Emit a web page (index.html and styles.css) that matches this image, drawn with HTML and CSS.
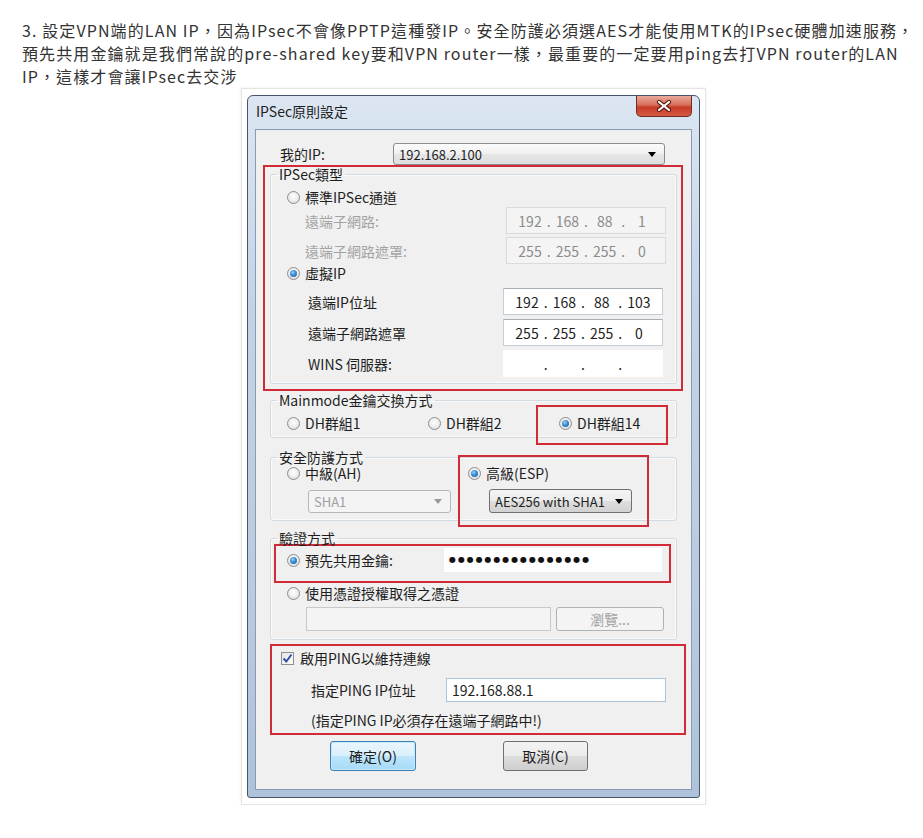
FILE: index.html
```html
<!DOCTYPE html>
<html lang="zh-Hant">
<head>
    <meta charset="UTF-8">
    <title>設定VPN端的LAN IP</title>
    <link rel="stylesheet" href="styles.css">
</head>
<body>
    <div class="post">
        <p>3. 設定VPN端的LAN IP，因為IPsec不會像PPTP這種發IP。安全防護必須選AES才能使用MTK的IPsec硬體加速服務，<br>預先共用金鑰就是我們常說的pre-shared key要和VPN router一樣，最重要的一定要用ping去打VPN router的LAN<br>IP，這樣才會讓IPsec去交涉</p>

        <div class="shot">
            <div class="window">
                <div class="titlebar">
                    <span class="title">IPSec原則設定</span>
                    <span class="close">
                        <svg width="16" height="12" viewBox="0 0 16 12"><path d="M3 2l10 8M13 2L3 10" stroke="#5a1a12" stroke-width="4.2" stroke-linecap="round"/><path d="M3 2l10 8M13 2L3 10" stroke="#fff" stroke-width="2.2" stroke-linecap="round"/></svg>
                    </span>
                </div>

                <div class="client">
                    <div class="row-myip">
                        <span class="lbl-myip">我的IP:</span>
                        <div class="combo wide"><span>192.168.2.100</span><svg width="8" height="5" viewBox="0 0 8 5"><path d="M0 0h8L4 5z"/></svg></div>
                    </div>

                    <!-- IPSec type -->
                    <div class="mark mark-type">
                        <fieldset>
                            <legend>IPSec類型</legend>
                            <div class="gb-body">
                                <div class="opt"><span class="radio"></span>標準IPSec通道</div>
                                <div class="frow off first">
                                    <span>遠端子網路:</span>
                                    <div class="field ip"><span>192</span><i>.</i><span>168</span><i>.</i><span>88</span><i>.</i><span>1</span></div>
                                </div>
                                <div class="frow off">
                                    <span>遠端子網路遮罩:</span>
                                    <div class="field ip"><span>255</span><i>.</i><span>255</span><i>.</i><span>255</span><i>.</i><span>0</span></div>
                                </div>
                                <div class="opt"><span class="radio on"></span>虛擬IP</div>
                                <div class="frow on first">
                                    <span>遠端IP位址</span>
                                    <div class="field ip"><span>192</span><i>.</i><span>168</span><i>.</i><span>88</span><i>.</i><span>103</span></div>
                                </div>
                                <div class="frow on">
                                    <span>遠端子網路遮罩</span>
                                    <div class="field ip"><span>255</span><i>.</i><span>255</span><i>.</i><span>255</span><i>.</i><span>0</span></div>
                                </div>
                                <div class="frow on">
                                    <span>WINS 伺服器:</span>
                                    <div class="field ip bare"><span></span><i>.</i><span></span><i>.</i><span></span><i>.</i><span></span></div>
                                </div>
                            </div>
                        </fieldset>
                    </div>

                    <!-- Mainmode -->
                    <fieldset class="gb gb-main">
                        <legend>Mainmode金鑰交換方式</legend>
                        <div class="gb-body dh-row">
                            <div class="opt"><span class="radio"></span>DH群組1</div>
                            <div class="opt"><span class="radio"></span>DH群組2</div>
                            <div class="mark mark-dh"><div class="opt"><span class="radio on"></span>DH群組14</div></div>
                        </div>
                    </fieldset>

                    <!-- security -->
                    <fieldset class="gb gb-sec">
                        <legend>安全防護方式</legend>
                        <div class="gb-body sec-row">
                            <div>
                                <div class="opt"><span class="radio"></span>中級(AH)</div>
                                <div class="combo off sha"><span>SHA1</span><svg width="8" height="5" viewBox="0 0 8 5"><path d="M0 0h8L4 5z"/></svg></div>
                            </div>
                            <div class="mark mark-esp">
                                <div class="opt"><span class="radio on"></span>高級(ESP)</div>
                                <div class="combo aes"><span>AES256 with SHA1</span><svg width="8" height="5" viewBox="0 0 8 5"><path d="M0 0h8L4 5z"/></svg></div>
                            </div>
                        </div>
                    </fieldset>

                    <!-- auth -->
                    <fieldset class="gb gb-auth">
                        <legend>驗證方式</legend>
                        <div class="gb-body">
                            <div class="mark mark-psk">
                                <div class="opt psk-opt"><span class="radio on"></span>預先共用金鑰:</div>
                                <div class="field psk">●●●●●●●●●●●●●●●●</div>
                            </div>
                            <div class="opt cert-opt"><span class="radio"></span>使用憑證授權取得之憑證</div>
                            <div class="cert-row">
                                <div class="field off cert"></div>
                                <div class="btn off browse">瀏覽...</div>
                            </div>
                        </div>
                    </fieldset>

                    <!-- ping -->
                    <div class="mark mark-ping">
                        <div class="opt chk-opt">
                            <span class="check"><svg width="11" height="11" viewBox="0 0 11 11"><path d="M1.5 5.5l2.8 3L9.5 1.5" fill="none" stroke="#304f9e" stroke-width="2"/></svg></span>
                            啟用PING以維持連線
                        </div>
                        <div class="ping-row">
                            <span>指定PING IP位址</span>
                            <div class="field ping">192.168.88.1</div>
                        </div>
                        <div class="ping-note">(指定PING IP必須存在遠端子網路中!)</div>
                    </div>

                    <div class="buttons">
                        <div class="btn ok">確定(O)</div>
                        <div class="btn cancel">取消(C)</div>
                    </div>
                </div>
            </div>
        </div>
    </div>
</body>
</html>
```

FILE: styles.css
```css
body { margin: 0; background: #fff; color: #333; font-family: "Noto Sans CJK TC", sans-serif; }
.post { padding: 19px 0 0 22px; }
.post p { margin: 0; font-size: 16px; line-height: 23px; letter-spacing: 1.1px; }

/* picture frame */
.shot { width: 453px; margin-left: 219px; padding: 6px 5px; border: 1px solid #e4e4e4; box-shadow: 0 0 3px rgba(0, 0, 0, .08); background: #fff; }

/* win7 window */
.window { width: 453px; box-sizing: border-box; padding: 0 7px 7px; border: 1px solid #46566b; border-radius: 6px 6px 3px 3px; background: linear-gradient(#dce6f2, #c3d3e6 30%, #b9cbe0 70%, #aec2da); color: #1e1e1e; font-size: 14px; }
.titlebar { height: 33px; display: flex; justify-content: space-between; align-items: flex-start; }
.title { padding-left: 1px; line-height: 30px; }
.close { width: 56px; height: 21px; display: flex; align-items: center; justify-content: center; border: 1px solid #6e2a24; border-top: none; border-radius: 0 0 5px 5px; background: linear-gradient(#eaa898, #d66f5c 45%, #c73a27 55%, #d45a44); box-sizing: border-box; }
.client { border: 1px solid #8a9bb1; background: #f0f0f0; padding: 13px 0 18px; }

.row-myip { display: flex; align-items: center; padding-left: 24px; }
.lbl-myip { width: 113px; }

.combo { height: 22px; box-sizing: border-box; display: flex; align-items: center; justify-content: space-between; padding: 0 8px 0 5px; border: 1px solid #707070; border-radius: 3px; background: linear-gradient(#f4f4f4, #ececec 50%, #dedede 50%, #d2d2d2); font-size: 13px; }
.combo.wide { width: 272px; background: linear-gradient(#fbfbfb, #f0f0f0 50%, #e6e6e6 50%, #dfdfdf); border-color: #8d8d8d; }
.combo.off { background: #f4f4f4; border-color: #b5b8bb; color: #a0a0a0; }
.combo.off svg { fill: #9a9a9a; }

/* red notes drawn on the screenshot */
.mark { border: 2px solid #d22b38; }
.mark-type { margin: 0 8px 0 7px; padding: 0 4px 5px 5px; }

fieldset { margin: 0; min-width: 0; padding: 0 10px 6px 8px; border: 1px solid #d3dbe2; border-radius: 3px; box-shadow: inset 0 0 0 1px #fafafa; }
legend { margin-left: -2px; padding: 0 2px; font-size: 14px; line-height: 14px; }
.gb { margin: 0 14px; }
.gb-body { padding-left: 8px; }

.opt { display: flex; align-items: center; height: 18px; }
.mark-type .opt:first-child { margin-top: 7px; }
.radio { position: relative; width: 13px; height: 13px; margin-right: 5px; box-sizing: border-box; border: 1px solid #8d8d8d; border-radius: 50%; background: radial-gradient(circle at 50% 40%, #fff 0, #ececec 55%, #cfcfcf 100%); }
.radio.on::after { content: ""; position: absolute; left: 2px; top: 2px; width: 7px; height: 7px; border-radius: 50%; background: radial-gradient(circle at 40% 35%, #9ad3f8 0, #3a8ad0 45%, #155d9f 100%); }

.frow { display: flex; align-items: center; justify-content: space-between; height: 27px; margin-top: 4px; padding-left: 18px; }
.frow.first { margin-top: 1px; }
.frow.off + .frow.off { margin-top: 3px; }
.opt + .frow.on { margin-top: 6px; }
.frow.off { color: #a3a3a3; }
.frow.on { padding-left: 21px; }
.frow.on .field { margin-right: 3px; }

.field { height: 100%; box-sizing: border-box; border: 1px solid #c5cdd6; border-top-color: #a8aeb6; background: #fff; }
.ip { width: 160px; display: flex; align-items: center; padding: 0 8px; }
.ip span { width: 30px; text-align: center; }
.ip i { flex: 1; text-align: center; font-style: normal; }
.frow.off .ip { background: #f4f4f4; border-color: #dadada; color: #8c8c8c; }
.ip.bare { border-color: #fff; }

.gb-main { margin-top: 2px; padding-bottom: 5px; }
.dh-row { display: grid; grid-template-columns: 141px 108px 132px; padding-top: 7px; }
.mark-dh { margin: -9px 0 -13px; padding: 7px 0 11px 21px; }

.gb-sec { margin-top: 12px; padding-bottom: 7px; }
.sec-row { display: grid; grid-template-columns: 171px 191px; }
.sha { width: 143px; height: 23px; margin: 8px 0 0 21px; }
.mark-esp { margin: -9px 0 -14px; padding: 7px 0 12px 8px; }
.aes { width: 143px; height: 24px; margin: 7px 0 0 21px; }

.gb-auth { margin-top: 10px; padding-bottom: 8px; }
.mark-psk { display: flex; align-items: center; margin: -1px -5px 0 -13px; padding: 1px 6px 8px 11px; }
.psk-opt { width: 156px; }
.psk { width: 220px; height: 26px; padding-left: 5px; font-family: "DejaVu Sans", sans-serif; font-size: 8px; line-height: 24px; letter-spacing: 1.9px; color: #111; border-color: #eceef0; }
.cert-opt { margin-top: 1px; }
.cert-row { display: flex; height: 24px; margin-top: 5px; padding-left: 19px; }
.cert { width: 245px; background: #f4f4f4; border-color: #c9c9c9; }

.btn { box-sizing: border-box; display: flex; align-items: center; justify-content: center; border: 1px solid #707070; border-radius: 3px; background: linear-gradient(#f3f3f3, #ebebeb 50%, #dddddd 50%, #cfcfcf); }
.btn.off { color: #a3a3a3; border-color: #adb2b5; background: #f4f4f4; }
.browse { width: 108px; margin-left: 5px; }

.mark-ping { margin: 4px 5px 0 14px; padding: 3px 0 4px 9px; }
.check { width: 13px; height: 13px; margin-right: 6px; box-sizing: border-box; border: 1px solid #8e8f8f; background: linear-gradient(135deg, #e6e6e6, #fafafa); display: flex; align-items: center; justify-content: center; }
.ping-row { display: flex; align-items: center; height: 24px; margin-top: 11px; padding-left: 30px; }
.ping-row span { width: 135px; }
.ping { width: 220px; padding-left: 5px; line-height: 22px; border-color: #a9c4db; }
.ping-note { height: 18px; line-height: 18px; margin-top: 9px; padding-left: 30px; }

.buttons { display: flex; margin-top: 6px; padding-left: 74px; }
.buttons .btn { height: 30px; }
.ok { width: 86px; border-color: #3c7fb1; background: linear-gradient(#eaf6fd, #d9f0fc 50%, #bee6fd 50%, #a7d9f5); box-shadow: inset 0 0 0 1px #c8e9fb; }
.cancel { width: 85px; margin-left: 87px; }
```
